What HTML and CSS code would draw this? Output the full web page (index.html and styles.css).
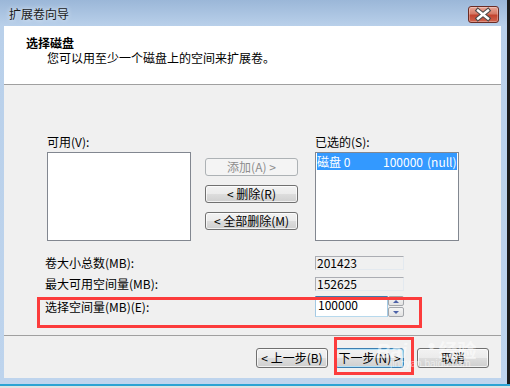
FILE: index.html
```html
<!DOCTYPE html>
<html lang="zh-CN">
<head>
    <meta charset="UTF-8">
    <meta name="viewport" content="width=device-width, initial-scale=1.0">
    <title>扩展卷向导</title>
    <link rel="stylesheet" href="styles.css">
</head>
<body>

<div class="screen">
    <div class="window">
        <!-- Title bar -->
        <div class="titlebar">
            <span class="title">扩展卷向导</span>
            <button class="close">
                <svg width="29" height="15" viewBox="0 0 29 15">
                    <path d="M9 3.5 L19 11.5 M19 3.5 L9 11.5" stroke="#4a4a4a" stroke-width="4.6" stroke-linecap="square"/>
                    <path d="M9 3.5 L19 11.5 M19 3.5 L9 11.5" stroke="#ffffff" stroke-width="2.4" stroke-linecap="square"/>
                </svg>
            </button>
        </div>

        <div class="dialog">
            <div class="header">
                <div class="head-title">选择磁盘</div>
                <div class="head-sub">您可以用至少一个磁盘上的空间来扩展卷。</div>
            </div>

            <div class="body">
                <!-- Available / selected disks -->
                <div class="lists">
                    <div class="col">
                        <div class="label">可用(V):</div>
                        <div class="listbox"></div>
                    </div>
                    <div class="mid">
                        <button class="btn" disabled>添加(A) &gt;</button>
                        <button class="btn">&lt; 删除(R)</button>
                        <button class="btn">&lt; 全部删除(M)</button>
                    </div>
                    <div class="col">
                        <div class="label">已选的(S):</div>
                        <div class="listbox">
                            <div class="item selected">
                                <span class="c-disk">磁盘 0</span>
                                <span class="c-size">100000</span>
                                <span class="c-fs">(null)</span>
                            </div>
                        </div>
                    </div>
                </div>

                <!-- Size fields -->
                <div class="fields">
                    <div class="frow">
                        <div class="flabel">卷大小总数(MB):</div>
                        <div class="field">201423</div>
                    </div>
                    <div class="frow">
                        <div class="flabel">最大可用空间量(MB):</div>
                        <div class="field">152625</div>
                    </div>
                    <div class="frow spin-row">
                        <div class="flabel">选择空间量(MB)(E):</div>
                        <div class="spin">
                            <div class="spin-input">100000</div>
                            <div class="spin-btns">
                                <span class="spin-btn"><i class="arrow-up"></i></span>
                                <span class="spin-btn"><i class="arrow-down"></i></span>
                            </div>
                        </div>
                    </div>
                </div>
            </div>

            <div class="footer">
                <button class="btn fbtn">&lt; 上一步(B)</button>
                <button class="btn fbtn next">下一步(N) &gt;</button>
                <button class="btn fbtn cancel">取消</button>
            </div>
        </div>
    </div>
    <div class="taskbar"></div>

    <!-- red annotation boxes -->
    <div class="mark mark-space"></div>
    <div class="mark mark-next"></div>

    <!-- faint watermark -->
    <div class="watermark">
        <span class="wm-logo">Bai</span><span class="wm-paw">●</span><span class="wm-cn">经验</span>
        <div class="wm-url">jingyan.baidu.com</div>
    </div>
</div>

</body>
</html>
```

FILE: styles.css
```css
body {
    margin: 0;
    font-family: "Noto Sans CJK SC", "Noto Sans", sans-serif;
    font-size: 12px;
    color: #000;
}
.screen {
    position: relative;
    width: 510px;
    height: 388px;
    overflow: hidden;
    background-color: #1b1b1b;
}
.window {
    width: 507px;
    height: 384px;
    display: flex;
    flex-direction: column;
    background: linear-gradient(#9bb7d8, #b9d0ea 26px, #bed4ed);
}
.taskbar {
    width: 510px;
    height: 4px;
    box-sizing: border-box;
    border-top: 2px solid #2aa3d3;
    background-color: #e2e2e2;
}

/* title bar */
.titlebar {
    height: 26px;
    display: flex;
    justify-content: space-between;
    align-items: flex-start;
    padding: 0 8px 0 9px;
}
.title {
    line-height: 27px;
    color: #1a1a1a;
    text-shadow: 0 0 5px rgba(255, 255, 255, 0.9);
}
.close {
    margin-top: 6px;
    width: 31px;
    height: 17px;
    padding: 0;
    border: 1px solid #6a2c25;
    border-radius: 3px;
    background: linear-gradient(#e9a797, #d57a66 45%, #c2442f 55%, #d0644e);
    box-shadow: inset 0 0 0 1px rgba(255, 255, 255, 0.3);
    display: flex;
    align-items: center;
    justify-content: center;
}

/* dialog */
.dialog {
    flex: 1;
    margin: 0 6px 6px 4px;
    display: flex;
    flex-direction: column;
    background-color: #f0f0f0;
}
.header {
    height: 59px;
    box-sizing: border-box;
    padding: 9px 0 0 22px;
    background-color: #fff;
    border-bottom: 1px solid #a0a0a0;
}
.head-title {
    font-weight: bold;
    line-height: 15px;
}
.head-sub {
    line-height: 15px;
    padding-left: 21px;
}
.body {
    flex: 1;
    padding: 50px 0 0 41px;
}
.lists {
    display: flex;
    margin-left: 2px;
}
.col {
    width: 144px;
}
.label {
    line-height: 14px;
    margin-bottom: 3px;
}
.listbox {
    height: 89px;
    box-sizing: border-box;
    border: 1px solid #828790;
    background-color: #fff;
    padding: 0 1px;
    overflow: hidden;
}
.item {
    display: flex;
    height: 17px;
    line-height: 17px;
    white-space: nowrap;
}
.item.selected {
    background-color: #3399ff;
    color: #fff;
}
.c-disk {
    flex: 0 0 66px;
}
.c-size {
    flex: 0 0 44px;
}
.mid {
    width: 93px;
    margin: 0 17px 0 14px;
    padding-top: 23px;
    display: flex;
    flex-direction: column;
    gap: 9px;
}

/* buttons */
.btn {
    font-family: inherit;
    font-size: 12px;
    height: 18px;
    padding: 0;
    line-height: 16px;
    color: #000;
    border: 1px solid #707070;
    border-radius: 3px;
    background: linear-gradient(#f2f2f2, #ebebeb 50%, #dddddd 50%, #cfcfcf);
    box-shadow: inset 0 0 0 1px rgba(255, 255, 255, 0.7);
    white-space: nowrap;
}
.btn:disabled {
    color: #8d8d8d;
    border-color: #adb2b5;
    background: #f4f4f4;
    box-shadow: none;
}

/* size fields */
.fields {
    margin-top: 15px;
}
.frow {
    display: flex;
    align-items: center;
}
.frow + .frow {
    margin-top: 7px;
}
.frow.spin-row {
    margin-top: 5px;
}
.flabel {
    width: 270px;
    line-height: 14px;
}
.field {
    width: 89px;
    height: 14px;
    box-sizing: border-box;
    border: 1px solid;
    border-color: #abadb3 #e3e9ef #e3e9ef #abadb3;
    background-color: #f0f0f0;
    line-height: 12px;
    padding-left: 1px;
}
.spin {
    width: 89px;
    height: 21px;
    display: flex;
}
.spin-input {
    flex: 1;
    box-sizing: border-box;
    border: 1px solid;
    border-color: #3d7bad #a4c9e3 #b7d9ed #a4c9e3;
    background-color: #fff;
    line-height: 15px;
    padding-left: 2px;
}
.spin-btns {
    width: 16px;
    display: flex;
    flex-direction: column;
    gap: 1px;
}
.spin-btn {
    flex: 1;
    box-sizing: border-box;
    border: 1px solid #a3a6ab;
    border-radius: 2px;
    background: linear-gradient(#f5f5f5, #e3e3e3);
    display: flex;
    align-items: center;
    justify-content: center;
}
.arrow-up {
    border: 3px solid transparent;
    border-bottom: 3px solid #4d62a8;
    border-top-width: 0;
}
.arrow-down {
    border: 3px solid transparent;
    border-top: 3px solid #4d62a8;
    border-bottom-width: 0;
}

/* wizard footer */
.footer {
    height: 43px;
    box-sizing: border-box;
    border-top: 1px solid #a0a0a0;
    display: flex;
    justify-content: flex-end;
    align-items: flex-start;
    padding: 12px 12px 0 0;
}
.fbtn {
    width: 72px;
    height: 20px;
    line-height: 18px;
}
.next {
    width: 69px;
    margin-left: 7px;
    border-color: #3c7fb1;
    box-shadow: inset 0 0 0 1px #b4e1f7;
}
.cancel {
    margin-left: 13px;
}

/* annotation overlays */
.mark {
    position: absolute;
    box-sizing: border-box;
    border: 3px solid #fc3c3c;
}
.mark-space {
    left: 37px;
    top: 297px;
    width: 385px;
    height: 31px;
}
.mark-next {
    left: 334px;
    top: 337px;
    width: 80px;
    height: 38px;
}
.watermark {
    position: absolute;
    left: 376px;
    top: 336px;
    color: rgba(255, 255, 255, 0.55);
    font-family: "Liberation Sans", "Noto Sans CJK SC", sans-serif;
    white-space: nowrap;
}
.wm-logo {
    font-size: 20px;
    font-weight: bold;
    font-style: italic;
}
.wm-paw {
    font-size: 14px;
    vertical-align: 8px;
    margin: 0 3px 0 20px;
}
.wm-cn {
    font-family: "Noto Sans CJK SC", sans-serif;
    font-size: 19px;
    font-weight: bold;
}
.wm-url {
    margin: -4px 0 0 14px;
    font-size: 10px;
    line-height: 10px;
}
```
